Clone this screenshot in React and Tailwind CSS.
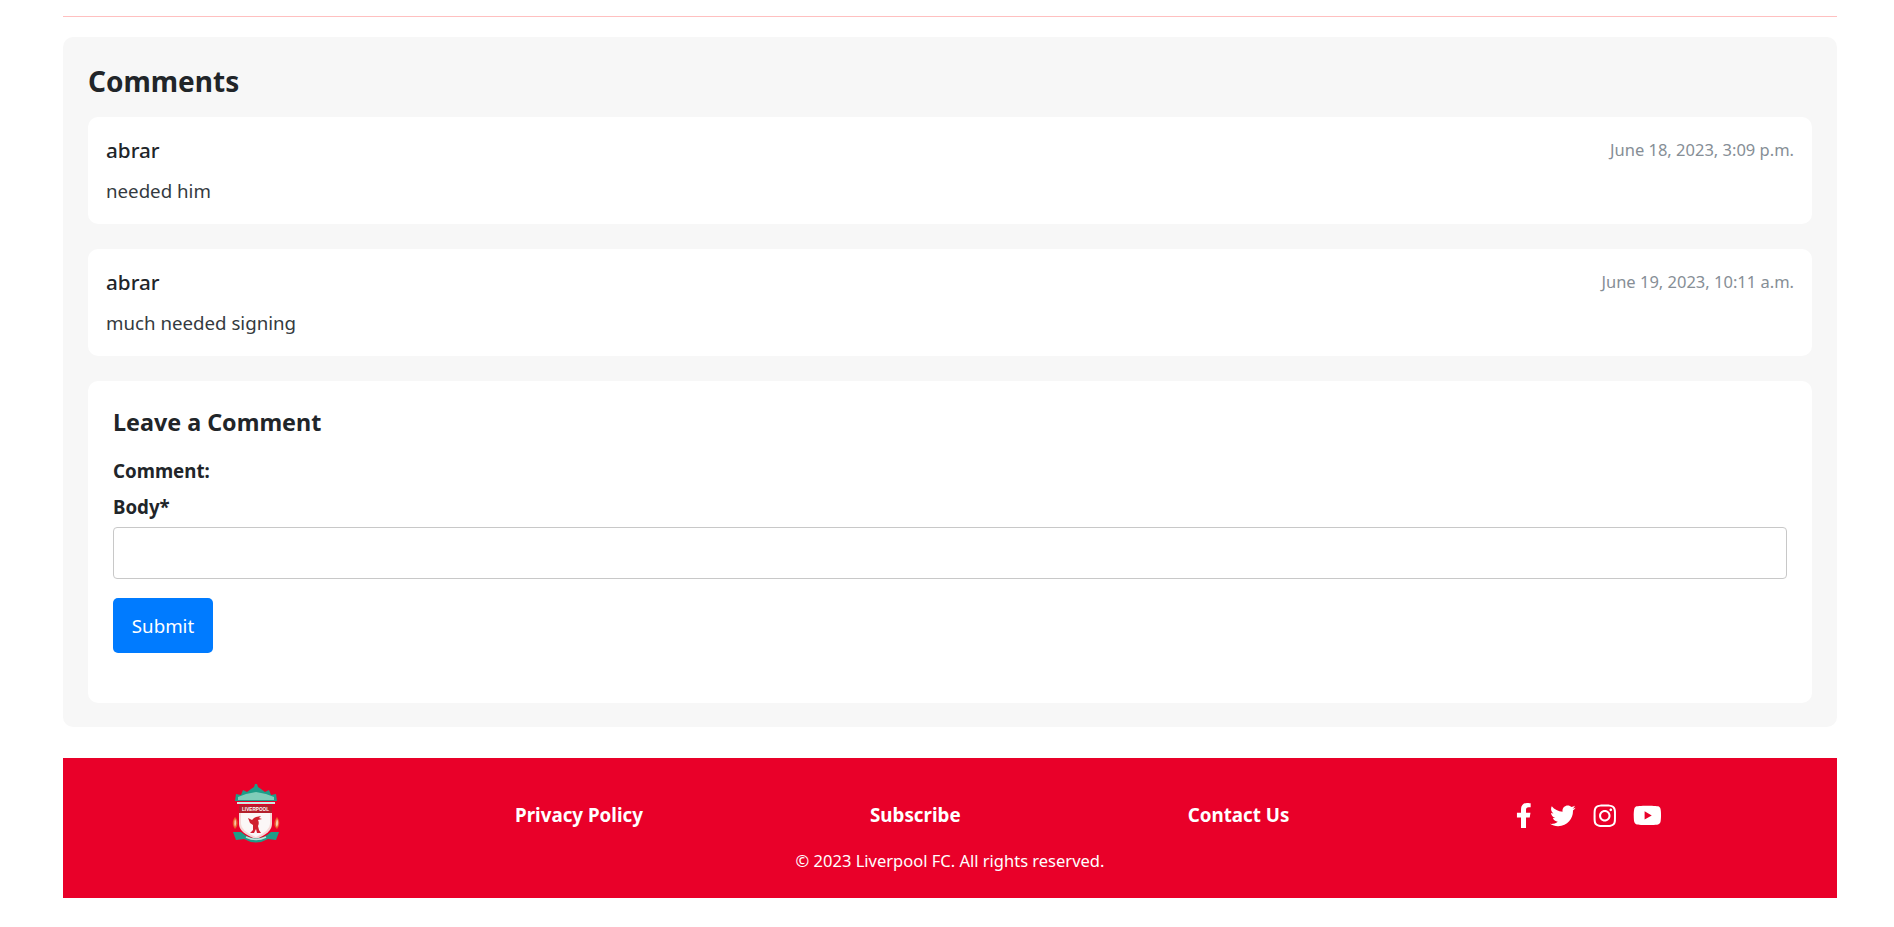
import { FaFacebookF, FaTwitter, FaInstagram, FaYoutube } from "react-icons/fa";

function Crest() {
  return (
    <svg width="48" height="62" viewBox="0 0 48 62" aria-hidden="true">
      <path d="M3 18 L4 11 L9 12 L11 7 L15 9 L19 6 L22 4 L23 1 L25 1 L26 4 L29 6 L33 9 L37 7 L39 12 L44 11 L45 18 Z" fill="#1e9d88" />
      <path d="M6 14 L14 11 L24 9 L34 11 L42 14 L42 17 L6 17 Z" fill="#7fcdb9" />
      <path d="M5 19 H43 V21 H5 Z" fill="#cfe9e2" />
      <path d="M7 22 H40 V41 Q40 50 24 56 Q7 50 7 41 Z" fill="#f6d7d7" />
      <path d="M9 30 H38 V41 Q38 48 24 54 Q9 48 9 41 Z" fill="#fbf7f7" />
      <path d="M7 22 H40 V30 H7 Z" fill="#b3202c" />
      <text x="23.5" y="28.2" textAnchor="middle" fontSize="6" fontWeight="700" fill="#fff" fontFamily="'Liberation Sans', sans-serif" textLength="27" lengthAdjust="spacingAndGlyphs">LIVERPOOL</text>
      <path d="M29 33 L27 35 L30 36 L26 37 C27 39 27 41 26 43 L27 47 L29 50 L25 50 L24 46 L22 50 L18 50 L21 47 L21 42 L18 40 L16 35 L20 37 L22 35 L24 34 Z" fill="#d0202e" />
      <path d="M3 34 C0 38 0 42 3 46 C6 43 7 38 3 34 Z" fill="#ee5b2c" />
      <path d="M45 34 C42 38 41 43 45 46 C48 42 48 38 45 34 Z" fill="#ee5b2c" />
      <path d="M3 36 C2 39 2 42 3 44 C4 42 5 39 3 36 Z" fill="#f8c9a8" />
      <path d="M45 36 C44 39 43 42 45 44 C46 42 47 39 45 36 Z" fill="#f8c9a8" />
      <path d="M1 49 L9 49 Q24 62 39 49 L47 49 L44 57 L36 56 Q24 63 12 56 L4 57 Z" fill="#1e9d88" />
      <path d="M14 54 Q24 59 34 54" fill="none" stroke="#bfe6da" strokeWidth="1.4" />
    </svg>
  );
}

function Comment({ name, date, body }) {
  return (
    <div className="bg-white rounded-[10px] px-[18px] pt-[17px] mb-[25px] h-[107px]">
      <div className="flex justify-between items-center h-[32px]">
        <span className="text-[20.7px] leading-[32px] font-medium text-[#212529]">{name}</span>
        <span className="text-[16.5px] leading-[32px] text-[#868e96]">{date}</span>
      </div>
      <p className="text-[18.7px] leading-[28px] mt-[11px] text-[#343a40]">{body}</p>
    </div>
  );
}

export default function App() {
  return (
    <div className="min-h-[927px] bg-white pl-[63px] pr-[57px] pt-[16px] text-[#212529] [font-family:'Noto_Sans',sans-serif]">
      <hr className="border-0 border-t border-[#ffc0c0]" />
      <section className="mt-[20px] bg-[#f7f7f7] rounded-[10px] p-[25px] h-[690px]">
        <h2 className="text-[28px] leading-[34px] font-bold text-[#212529] mt-[2px] mb-[19px]">Comments</h2>
        <Comment name="abrar" date="June 18, 2023, 3:09 p.m." body="needed him" />
        <Comment name="abrar" date="June 19, 2023, 10:11 a.m." body="much needed signing" />
        <div className="bg-white rounded-[10px] p-[25px] h-[322px]">
          <h3 className="text-[23.3px] leading-[29px] font-bold mt-[2px] mb-[20px]">Leave a Comment</h3>
          <div className="text-[18.7px] leading-[27px] font-bold">Comment:</div>
          <label className="block text-[18.7px] leading-[27px] font-bold mt-[9px] mb-[7px]">Body*</label>
          <input aria-label="Body" className="block w-full h-[52px] border border-[#c8c8c8] rounded-[4px] bg-white" />
          <button className="block mt-[19px] w-[100px] h-[55px] pt-[1px] bg-[#007bff] text-white text-[18.7px] rounded-[5px]">Submit</button>
        </div>
      </section>
      <footer className="mt-[31px] bg-[#e90029] h-[140px] text-white">
        <div className="flex items-center pt-[25px] pl-[161px]">
          <div className="w-[64px] flex justify-center"><Crest /></div>
          <div className="flex items-center gap-[227px] ml-[227px] font-bold text-[18.8px] leading-[27px] pt-[3px]">
            <a>Privacy Policy</a>
            <a>Subscribe</a>
            <a>Contact Us</a>
            <div className="flex items-center text-[25.6px] -ml-[5px]">
              <FaFacebookF />
              <FaTwitter className="ml-[13px]" />
              <FaInstagram className="ml-[16px]" />
              <FaYoutube className="ml-[16px] text-[28.8px]" />
            </div>
          </div>
        </div>
        <p className="text-center text-[16.5px] leading-[24px] mt-[4px]">© 2023 Liverpool FC. All rights reserved.</p>
      </footer>
    </div>
  );
}
